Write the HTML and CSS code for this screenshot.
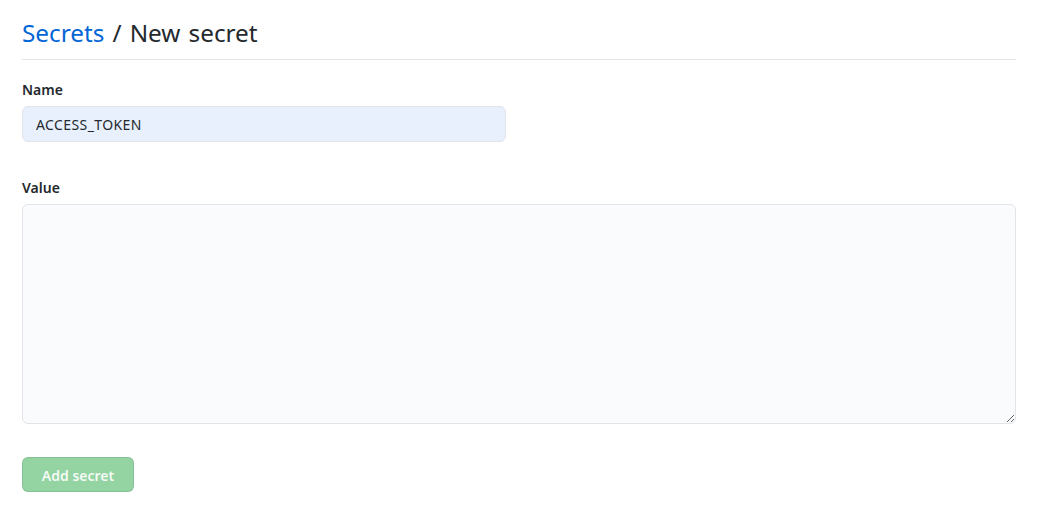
FILE: index.html
```html
<!DOCTYPE html>
<html>
<head>
<meta charset="utf-8">
<link rel="stylesheet" href="styles.css">
</head>
<body>
<main class="page">
  <div class="subhead">
    <h2 class="subhead-heading"><a class="crumb" href="#">Secrets</a> / New secret</h2>
  </div>
  <form class="secret-form">
    <div class="form-group">
      <label class="form-label" for="name">Name</label>
      <input class="name-input" id="name" type="text" value="ACCESS_TOKEN">
    </div>
    <div class="form-group value-group">
      <label class="form-label" for="value">Value</label>
      <textarea class="value-input" id="value"></textarea>
    </div>
    <button class="btn-primary" type="button" disabled>Add secret</button>
  </form>
</main>
</body>
</html>
```

FILE: styles.css
```css
* { box-sizing: border-box; }
html, body { margin: 0; padding: 0; background: #fff; }
body {
  font-family: "Noto Sans", "Open Sans", "Liberation Sans", sans-serif;
  color: #24292e;
  font-size: 14px;
}
.page {
  width: 994px;
  margin-left: 22px;
  padding-top: 15px;
}
.subhead {
  border-bottom: 1px solid #e1e4e8;
  padding-bottom: 8px;
}
.subhead-heading {
  margin: 0;
  font-size: 24.3px;
  word-spacing: 1.8px;
  font-weight: 400;
  line-height: 36px;
  color: #24292e;
}
.crumb { color: #0366d6; text-decoration: none; }
.secret-form { display: flex; flex-direction: column; padding-top: 19px; }
.form-group { display: flex; flex-direction: column; align-items: flex-start; }
.form-label {
  font-weight: 600;
  font-size: 14px;
  line-height: 21px;
  margin-bottom: 6px;
}
.name-input {
  width: 484px;
  height: 36px;
  padding: 0 13px;
  font: inherit;
  font-size: 14px;
  letter-spacing: 0.4px;
  color: #24292e;
  background: #e8f0fe;
  border: 1px solid #e1e4e8;
  border-radius: 6px;
  outline: none;
}
.value-group { margin-top: 35px; }
.value-input {
  width: 994px;
  height: 220px;
  padding: 8px 12px;
  font: inherit;
  background: #fafbfc;
  border: 1px solid #e1e4e8;
  border-radius: 6px;
  resize: vertical;
  outline: none;
}
.btn-primary {
  align-self: flex-start;
  margin-top: 33px;
  width: 112px;
  height: 35px;
  padding: 1px 0 0;
  font: inherit;
  font-weight: 600;
  font-size: 14px;
  color: rgba(255,255,255,0.92);
  background: #94d3a2;
  border: 1px solid rgba(27,31,35,0.1);
  border-radius: 6px;
}
```
